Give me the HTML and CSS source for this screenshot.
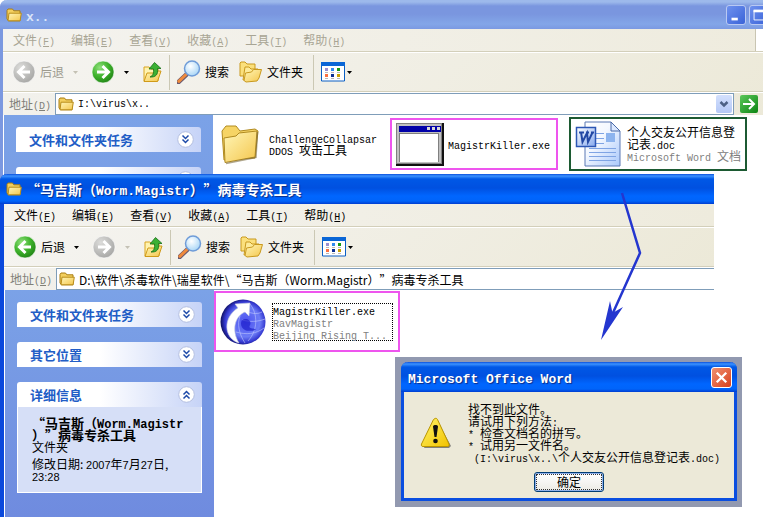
FILE: index.html
```
<!DOCTYPE html>
<html lang="zh-CN">
<head>
    <meta charset="UTF-8">
    <title>x..</title>
    <link rel="stylesheet" href="styles.css">
</head>
<body>
    <!-- shared icons -->
    <svg class="defs" width="0" height="0">
        <defs>
            <linearGradient id="gFolder" x1="0" y1="0" x2="1" y2="1">
                <stop offset="0" stop-color="#fff6b8"/>
                <stop offset="1" stop-color="#f4c64c"/>
            </linearGradient>
            <radialGradient id="gGreen" cx="0.35" cy="0.3" r="0.8">
                <stop offset="0" stop-color="#8fe07c"/>
                <stop offset="0.5" stop-color="#3fb32c"/>
                <stop offset="1" stop-color="#1c7d12"/>
            </radialGradient>
            <radialGradient id="gGray" cx="0.35" cy="0.3" r="0.8">
                <stop offset="0" stop-color="#dcdcda"/>
                <stop offset="1" stop-color="#a3a3a1"/>
            </radialGradient>
            <radialGradient id="gLens" cx="0.4" cy="0.35" r="0.7">
                <stop offset="0" stop-color="#ffffff"/>
                <stop offset="1" stop-color="#a4d4f6"/>
            </radialGradient>
            <linearGradient id="gPaper" x1="0" y1="0" x2="1" y2="1">
                <stop offset="0" stop-color="#ffffff"/>
                <stop offset="0.4" stop-color="#f4f8ff"/>
                <stop offset="1" stop-color="#a9c8fb"/>
            </linearGradient>
            <linearGradient id="gWord" x1="0" y1="0" x2="1" y2="1">
                <stop offset="0" stop-color="#ffffff"/>
                <stop offset="1" stop-color="#86a9ee"/>
            </linearGradient>
            <radialGradient id="gGlobe" cx="0.55" cy="0.5" r="0.55">
                <stop offset="0" stop-color="#4a50ee"/>
                <stop offset="0.6" stop-color="#6c7cf6"/>
                <stop offset="0.82" stop-color="#3438d0"/>
                <stop offset="1" stop-color="#0d0f60"/>
            </radialGradient>
            <linearGradient id="gWarn" x1="0" y1="0" x2="1" y2="1">
                <stop offset="0" stop-color="#fff56a"/>
                <stop offset="1" stop-color="#f2c200"/>
            </linearGradient>
        </defs>
        <symbol id="folder" viewBox="0 0 16 16">
            <path d="M1 3.5 2 2h4.5l1.3 1.8H14v10H2.5L1 12z" fill="#f3cf5e" stroke="#a87d12"/>
            <path d="M2 13.8 3 6.2h12.3l-1.2 7.6z" fill="url(#gFolder)" stroke="#b98d1c"/>
        </symbol>
        <symbol id="back" viewBox="0 0 24 24">
            <circle cx="12" cy="12" r="11" stroke="#fff" stroke-opacity=".6"/>
            <path d="M12.5 6 6.5 12l6 6M7 12h11" fill="none" stroke="#fff" stroke-width="3"/>
        </symbol>
        <symbol id="forward" viewBox="0 0 24 24">
            <circle cx="12" cy="12" r="11" stroke="#fff" stroke-opacity=".6"/>
            <path d="M11.5 6l6 6-6 6M17 12H6" fill="none" stroke="#fff" stroke-width="3"/>
        </symbol>
        <symbol id="up" viewBox="0 0 20 24">
            <path d="M2 21V7h5l2 2h7v12z" fill="#fff3b0" stroke="#d9a520"/>
            <path d="M2 21.500 5 13h7l2-2h5L15.500 21.500z" fill="url(#gFolder)" stroke="#d09a18"/>
            <path d="M8 17c3-1 4-4 3.500-8H7L12.500 2.500 19 8.500H15.500c1 6-2 9-7.500 8.500z" fill="#3cb034" stroke="#156e15" stroke-width=".8"/>
        </symbol>
        <symbol id="search" viewBox="0 0 24 24">
            <path d="M9.500 14.500 1.500 22" stroke="#6a5a70" stroke-width="4.500" stroke-linecap="round"/>
            <path d="M9 14.500 1.800 21.300" stroke="#f08a3c" stroke-width="3" stroke-linecap="round"/>
            <circle cx="15" cy="8.500" r="7.500" fill="url(#gLens)" stroke="#6f9cd8" stroke-width="1.500"/>
        </symbol>
        <symbol id="folders" viewBox="0 0 24 24">
            <path d="M1 16V3l1-1h4l2 2h8v12z" fill="#fbe07c" stroke="#c9991e"/>
            <path d="M4 20 6 7h4l2 2h7v10z" fill="#fdeb9a" stroke="#c9991e"/>
            <path d="M5 20.500 6.500 13l6-1 2-2.500h8L20 18l-2 3-11 1z" fill="url(#gFolder)" stroke="#c9991e"/>
        </symbol>
        <symbol id="views" viewBox="0 0 24 20">
            <path d="M.5 1h23v18H.5z" fill="#fff" stroke="#0a5fc4"/>
            <path d="M0 0h24v4H0z" fill="#0a66d6"/>
            <path d="M4 6h3v3H4z" fill="#9a8ed0"/>
            <path d="M10 6h3v3h-3z" fill="#2e8af0"/>
            <path d="M16 6h3v3h-3z" fill="#169a16"/>
            <path d="M4 12h3v3H4z" fill="#fb7040"/>
            <path d="M10 12h3v3h-3z" fill="#0b2f92"/>
            <path d="M16 12h3v3h-3z" fill="#c8a000"/>
            <path d="M4 10.500h3m3 0h3m3 0h3M4 16.500h3m3 0h3m3 0h3" stroke="#b8b8b8"/>
        </symbol>
        <symbol id="caret" viewBox="0 0 7 7">
            <path d="M1 2h5L3.500 5z" fill="currentColor"/>
        </symbol>
        <symbol id="chevrons" viewBox="0 0 17 17">
            <circle cx="8.500" cy="8.500" r="7.800" fill="#fff" stroke="#b4bfe0"/>
            <path d="M5.500 4.500l3 3 3-3M5.500 8.500l3 3 3-3" fill="none" stroke="#1c49a8" stroke-width="1.500"/>
        </symbol>
    </svg>

    <div class="desktop">
        <section class="window window-back">
            <header class="titlebar">
                <svg class="icon16"><use href="#folder"/></svg>
                <h1><span class="en">x..</span></h1>
                <div class="window-buttons">
                    <button type="button" aria-label="最小化"><svg viewBox="0 0 20 20"><path d="M5 13h7v3H5z" fill="#fff"/></svg></button>
                    <button type="button" aria-label="最大化"><svg viewBox="0 0 20 20"><path d="M4 5.500h12M4.500 5v10.500h11V5" fill="none" stroke="#fff"/><path d="M4 4h12v3H4z" fill="#fff"/></svg></button>
                    <button type="button" class="close" aria-label="关闭"><svg viewBox="0 0 20 20"><path d="M5 5l10 10M15 5 5 15" stroke="#fff" stroke-width="2"/></svg></button>
                </div>
            </header>
            <nav class="menubar">
                <button type="button">文件<span class="en">(<u>F</u>)</span></button>
                <button type="button">编辑<span class="en">(<u>E</u>)</span></button>
                <button type="button">查看<span class="en">(<u>V</u>)</span></button>
                <button type="button">收藏<span class="en">(<u>A</u>)</span></button>
                <button type="button">工具<span class="en">(<u>T</u>)</span></button>
                <button type="button">帮助<span class="en">(<u>H</u>)</span></button>
                <span class="flag"></span>
            </nav>
            <div class="toolbar">
                <button type="button" class="nav off"><svg class="icon24"><use href="#back"/></svg>后退<svg class="caret"><use href="#caret"/></svg></button>
                <button type="button" class="nav"><svg class="icon24"><use href="#forward"/></svg><svg class="caret"><use href="#caret"/></svg></button>
                <button type="button" aria-label="向上"><svg class="icon-up"><use href="#up"/></svg></button>
                <span class="separator"></span>
                <button type="button" class="labelled"><svg class="icon24"><use href="#search"/></svg>搜索</button>
                <button type="button" class="labelled"><svg class="icon24"><use href="#folders"/></svg>文件夹</button>
                <span class="separator"></span>
                <button type="button" class="views" aria-label="查看"><svg class="icon-views"><use href="#views"/></svg><svg class="caret"><use href="#caret"/></svg></button>
            </div>
            <div class="addressbar">
                <label for="address1">地址<span class="en">(<u>D</u>)</span></label>
                <div class="address">
                    <svg class="icon16"><use href="#folder"/></svg>
                    <input id="address1" class="latin" type="text" value="I:\virus\x..">
                    <button type="button" class="drop" aria-label="展开"><svg viewBox="0 0 16 16"><path d="M4.500 6 8 9.500 11.500 6" fill="none" stroke="#4d6185" stroke-width="2.500"/></svg></button>
                </div>
                <button type="button" class="go" aria-label="转到"><svg viewBox="0 0 18 18"><path d="M9 4l5 5-5 5M14 9H3" fill="none" stroke="#fff" stroke-width="2"/></svg></button>
            </div>
            <div class="content">
                <aside class="sidebar">
                    <div class="panel">
                        <h2>文件和文件夹任务<svg class="icon17"><use href="#chevrons"/></svg></h2>
                    </div>
                    <div class="panel">
                        <h2><svg class="icon17"><use href="#chevrons"/></svg></h2>
                    </div>
                </aside>
                <div class="files">
                    <div class="file first">
                        <svg class="icon48" viewBox="0 0 48 48">
                            <path d="M7 40 5 11l4-5h10l4 5 15-2 3 2-3 27z" fill="#f6d465" stroke="#b08a20"/>
                            <path d="M8 42.500 7 18l12-2 3-3 18-2-2 26z" fill="url(#gFolder)" stroke="#b08a20"/>
                            <path d="M40.500 12 39 37.500 9 43.500" fill="none" stroke="#7b6a40" stroke-opacity=".6" stroke-width="1.500"/>
                        </svg>
                        <p><span class="en">ChallengeCollapsar</span><br><span class="en">DDOS </span>攻击工具</p>
                    </div>
                    <div class="file pink">
                        <svg class="icon48" viewBox="0 0 48 48">
                            <path d="M0 3h48v43H0z" fill="#111"/>
                            <path d="M0 3h46v41H0z" fill="#808080"/>
                            <path d="M1 4h44v39H1z" fill="#c0c0c0"/>
                            <path d="M3 6h42v6H3z" fill="#0000a8"/>
                            <path d="M31 7h3v3h-3zM36 7h3v3h-3zM41 7h3v3h-3z" fill="#d8d8d8"/>
                            <path d="M3 13h40v29H3z" fill="#808080"/>
                            <path d="M4 14h38v28H4z" fill="#fff"/>
                        </svg>
                        <p><span class="en">MagistrKiller.exe</span></p>
                    </div>
                    <div class="file green">
                        <svg class="icon48" viewBox="0 0 48 48">
                            <path d="M10 2h26l9 9v35H10z" fill="url(#gPaper)" stroke="#5a78b4"/>
                            <path d="M36 2v9h9z" fill="#dbe8ff" stroke="#4a6aa8"/>
                            <path d="M14 32.500h27M14 36.500h27M14 40.500h27M14 28.500h27M21 13.500h8M21 18.500h8M21 23.500h8" stroke="#7fa4e4"/>
                            <path d="M31 13h9v9h-9z" fill="#8db4ee"/>
                            <path d="M1.500 7.500h19v19h-19z" fill="url(#gWord)" stroke="#2c56b4" stroke-width="1.500"/>
                            <path d="M4 12.500h5M11 12.500h3M16 12.500h3M6 12l1.500 10L12 13l1 9 4.500-9.500" fill="none" stroke="#2348a4" stroke-width="2"/>
                        </svg>
                        <p>个人交友公开信息登<br>记表<span class="en">.doc</span><br><span class="muted"><span class="en">Microsoft Word </span>文档</span></p>
                    </div>
                </div>
            </div>
        </section>

        <section class="window window-front">
            <header class="titlebar">
                <svg class="icon16"><use href="#folder"/></svg>
                <h1>“马吉斯（<span class="en">Worm.Magistr</span>）”病毒专杀工具</h1>
            </header>
            <nav class="menubar">
                <button type="button">文件<span class="en">(<u>F</u>)</span></button>
                <button type="button">编辑<span class="en">(<u>E</u>)</span></button>
                <button type="button">查看<span class="en">(<u>V</u>)</span></button>
                <button type="button">收藏<span class="en">(<u>A</u>)</span></button>
                <button type="button">工具<span class="en">(<u>T</u>)</span></button>
                <button type="button">帮助<span class="en">(<u>H</u>)</span></button>
            </nav>
            <div class="toolbar">
                <button type="button" class="nav"><svg class="icon24"><use href="#back"/></svg>后退<svg class="caret"><use href="#caret"/></svg></button>
                <button type="button" class="nav off"><svg class="icon24"><use href="#forward"/></svg><svg class="caret"><use href="#caret"/></svg></button>
                <button type="button" aria-label="向上"><svg class="icon-up"><use href="#up"/></svg></button>
                <span class="separator"></span>
                <button type="button" class="labelled"><svg class="icon24"><use href="#search"/></svg>搜索</button>
                <button type="button" class="labelled"><svg class="icon24"><use href="#folders"/></svg>文件夹</button>
                <span class="separator"></span>
                <button type="button" class="views" aria-label="查看"><svg class="icon-views"><use href="#views"/></svg><svg class="caret"><use href="#caret"/></svg></button>
            </div>
            <div class="addressbar">
                <label for="address2">地址<span class="en">(<u>D</u>)</span></label>
                <div class="address">
                    <svg class="icon16"><use href="#folder"/></svg>
                    <input id="address2" type="text" value="D:\软件\杀毒软件\瑞星软件\“马吉斯（Worm.Magistr）”病毒专杀工具">
                </div>
            </div>
            <div class="content">
                <aside class="sidebar">
                    <div class="panel">
                        <h2>文件和文件夹任务<svg class="icon17"><use href="#chevrons"/></svg></h2>
                    </div>
                    <div class="panel">
                        <h2>其它位置<svg class="icon17"><use href="#chevrons"/></svg></h2>
                    </div>
                    <div class="panel">
                        <h2>详细信息<svg class="icon17 flip"><use href="#chevrons"/></svg></h2>
                        <div class="details">
                            <p><b>“马吉斯（<span class="en">Worm.Magistr</span><br>）”病毒专杀工具</b><br>文件夹</p>
                            <p>修改日期: <span class="num">2007</span>年<span class="num">7</span>月<span class="num">27</span>日,<br><span class="num">23:28</span></p>
                        </div>
                    </div>
                </aside>
                <div class="files">
                    <div class="file pink selected">
                        <svg class="icon48" viewBox="0 0 48 48">
                            <circle cx="23" cy="24" r="22.500" fill="url(#gGlobe)"/>
                            <path d="M16 34c10 3 20 2 28-4M30 6c8 10 8 26-2 37M28 14c6 2 10 2 14 0M22 22c8 2 15 2 23-1M20 18c-3 8-1 18 5 27" fill="none" stroke="#c0c8ff" stroke-opacity=".6"/>
                            <path d="M22 22c5-3 10 1 8 5s2 3 5 4-6 3-10 1-5-7-3-10z" fill="#1e20cc" fill-opacity=".7"/>
                            <path d="M15 6 30 5 29 18 25 14C15 18 11 32 19 45 3 40 3 19 18 10z" fill="#fff" stroke="#c8ccdc" stroke-width=".6"/>
                        </svg>
                        <p><span class="en">MagistrKiller.exe</span><br><span class="muted"><span class="en">RavMagistr</span><br><span class="en">Beijing Rising T...</span></span></p>
                    </div>
                </div>
            </div>
        </section>

        <div class="dialog-frame">
            <div class="dialog" role="dialog" aria-labelledby="dialogTitle">
                <header class="titlebar">
                    <h1 id="dialogTitle"><span class="en">Microsoft Office Word</span></h1>
                    <button type="button" class="close" aria-label="关闭"><svg viewBox="0 0 20 20"><path d="M5 5l10 10M15 5 5 15" stroke="#fff" stroke-width="2.500"/></svg></button>
                </header>
                <div class="message">
                    <svg class="warning" viewBox="0 0 32 32">
                        <path d="M17 3 31 29 29 31H4z" fill="#555" fill-opacity=".7"/>
                        <path d="M15 1.500c1-.5 2 0 2.500 1L29 27c.5 1.500 0 2.500-1.500 2.500H3C1.500 29.500 1 28.500 1.500 27L13.500 2.500z" fill="url(#gWarn)" stroke="#b99400"/>
                        <path d="M13 9.500c0-2 5-2 5 0L16.500 20h-2z" fill="#111"/>
                        <circle cx="15.500" cy="24" r="2.300" fill="#111"/>
                    </svg>
                    <p>找不到此文件。<br>请试用下列方法<span class="en">:</span><br><span class="en">* </span>检查文档名的拼写。<br><span class="en">* </span>试用另一文件名。<br><span class="en"> (I:\virus\x..\</span>个人交友公开信息登记表<span class="en">.doc)</span></p>
                </div>
                <div class="actions">
                    <button type="button" class="ok"><span>确定</span></button>
                </div>
            </div>
        </div>

        <svg class="arrow" viewBox="0 0 44 150">
            <path d="M22 2 40 62 12 124" fill="none" stroke="#2436cf" stroke-width="2.500"/>
            <path d="M1 149 10 110 12.500 122 23 116z" fill="#2436cf"/>
        </svg>
    </div>
</body>
</html>
```
FILE: styles.css
```
* {
    box-sizing: border-box;
}
body {
    margin: 0;
    background: white;
    color: black;
    font-family: "Noto Sans CJK SC", sans-serif;
    font-size: 12px;
    line-height: 12px;
    text-spacing-trim: space-all;
}
h1, h2, p {
    margin: 0;
}
button, input {
    margin: 0;
    padding: 0;
    border: none;
    background: none;
    color: inherit;
    font: inherit;
    text-spacing-trim: inherit;
}
svg {
    display: block;
    flex: none;
}
.defs {
    position: absolute;
}
.en {
    font-family: "Liberation Mono", monospace;
    font-size: 10px;
    line-height: 0;
    white-space: pre;
}
.num {
    font-family: "Liberation Sans", sans-serif;
    font-size: 11px;
    line-height: 0;
}
.muted {
    color: #808080;
}
.icon16 {
    width: 16px;
    height: 16px;
}
.icon17 {
    width: 17px;
    height: 17px;
    margin-left: auto;
}
.icon24 {
    width: 24px;
    height: 24px;
}
.icon48 {
    width: 48px;
    height: 48px;
}
.icon-up {
    width: 20px;
    height: 24px;
}
.icon-views {
    width: 24px;
    height: 20px;
}
.flip {
    transform: rotate(180deg);
}

/* windows */
.desktop {
    position: relative;
    min-height: 100vh;
    overflow: hidden;
}
.window {
    position: absolute;
    bottom: 0;
    left: 0;
    display: flex;
    flex-direction: column;
    background: white;
}
.window-back {
    top: 0;
    right: -34px;
    border-left: 3px solid #7b98e0;
    border-radius: 7px 0 0 0;
}
.window-front {
    top: 174px;
    right: 49px;
    border-left: 4px solid #0a48dc;
    border-radius: 7px 0 0 0;
}
.titlebar {
    display: flex;
    align-items: center;
    height: 30px;
    flex: none;
    gap: 4px;
    padding: 0 5px 0 2px;
    color: white;
    background: linear-gradient(#0a50dc 0, #3c92ff 2px, #0058e6 5px, #0050e0 14px, #0066ff 22px, #0064fa 27px, #003dd0 30px);
}
.titlebar h1 {
    flex: 1;
    font-size: 14px;
    line-height: 20px;
    font-weight: bold;
    white-space: nowrap;
    text-shadow: 1px 1px 1px #0a2c88;
}
.titlebar .en {
    font-size: 13px;
}
.window .titlebar {
    margin-left: -4px;
    padding-left: 6px;
    border-radius: 7px 0 0 0;
}
.window-back .titlebar {
    height: 29px;
    margin-left: -3px;
    color: #dbe5f9;
    background: linear-gradient(#9db9eb 0, #9db9eb 2px, #7a96df 6px, #7a96df 14px, #83a6e8 24px, #7b99e2 29px);
}
.window-back .titlebar h1 {
    text-shadow: none;
}
.window-buttons {
    display: flex;
    gap: 3px;
}
.window-buttons button {
    width: 20px;
    height: 20px;
    border: 1px solid #b9c9f3;
    border-radius: 3px;
    background: linear-gradient(135deg, #6e91ee, #3a63d8);
}
.window-buttons .close {
    background: #c8705c;
}
.menubar {
    display: flex;
    align-items: center;
    gap: 16px;
    height: 23px;
    flex: none;
    padding-left: 10px;
    border-bottom: 1px solid #d3cfba;
    background: linear-gradient(90deg, #f4f3ef, #eeebdd);
}
.menubar button {
    white-space: nowrap;
}
.window-back .menubar {
    color: #a8a594;
}
.flag {
    align-self: stretch;
    width: 42px;
    margin-left: auto;
    border-left: 1px solid #c9c5b2;
    background: white;
}
.toolbar {
    display: flex;
    align-items: center;
    gap: 7px;
    height: 40px;
    flex: none;
    padding-left: 9px;
    border-top: 1px solid white;
    border-bottom: 1px solid #d3cfba;
    background: linear-gradient(135deg, #f5f4f1, #ece9d8);
}
.toolbar button {
    display: flex;
    align-items: center;
    gap: 4px;
    fill: url(#gGreen);
}
.toolbar .off {
    color: #9c9a8e;
    fill: url(#gGray);
}
.toolbar .off .caret {
    color: #c4c1b4;
}
.toolbar .nav {
    padding-right: 5px;
}
.toolbar .labelled {
    padding-right: 3px;
}
.toolbar .views {
    gap: 1px;
}
.caret {
    width: 7px;
    height: 7px;
}
.nav .caret {
    margin-left: 4px;
}
.separator {
    width: 1px;
    height: 35px;
    background: #cbc8b4;
}
.addressbar {
    display: flex;
    align-items: center;
    height: 23px;
    flex: none;
    gap: 4px;
    padding-left: 6px;
    border-top: 1px solid white;
    color: #808078;
    background: linear-gradient(90deg, #f2f1ec, #ece9d8);
}
.window-back .addressbar {
    padding-right: 39px;
}
.address {
    display: flex;
    align-items: center;
    align-self: stretch;
    flex: 1;
    gap: 4px;
    padding: 0 1px 0 2px;
    border: 1px solid #7f9db9;
    background: white;
    color: black;
}
.window-back .address {
    margin-right: 2px;
}
.window-front .address {
    border-right: none;
}
.address input {
    flex: 1;
    min-width: 0;
    height: 18px;
    outline: none;
}
.address .latin {
    font-family: "Liberation Mono", monospace;
    font-size: 10px;
}
.drop {
    width: 16px;
    height: 18px;
    border-radius: 2px;
    background: linear-gradient(#d3e0fd, #b4c8f6);
}
.go {
    width: 18px;
    height: 18px;
    border-radius: 2px;
    background: linear-gradient(135deg, #5cc85a, #0b8412);
}

/* folder view */
.content {
    display: flex;
    flex: 1;
    min-height: 0;
    overflow: hidden;
}
.sidebar {
    display: flex;
    flex-direction: column;
    gap: 15px;
    width: 210px;
    flex: none;
    padding: 12px;
    border-left: 1px solid white;
    background: linear-gradient(#7ba2e7, #6f8bdf);
}
.panel h2 {
    display: flex;
    align-items: center;
    height: 25px;
    padding: 0 7px 0 13px;
    border-radius: 3px 3px 0 0;
    color: #215dc6;
    background: linear-gradient(90deg, #ffffff 45%, #c6d3f7);
    font-size: 13px;
    font-weight: bold;
}
.details {
    padding: 10px 14px;
    border: 1px solid white;
    border-top: none;
    background: #d6dff7;
}
.details p {
    white-space: nowrap;
}
.details p + p {
    margin-top: 5px;
}
.details b {
    font-size: 13px;
    line-height: 0;
}
.details .en {
    font-size: 12px;
}
.files {
    display: flex;
    align-items: center;
    align-self: flex-start;
    padding-top: 2px;
}
.window-front .files {
    padding-top: 1px;
}
.file {
    display: flex;
    align-items: center;
    gap: 4px;
    padding: 0 4px;
    white-space: nowrap;
}
.first {
    width: 177px;
}
.pink {
    width: 168px;
    border: 2px solid #ee55ee;
}
.green {
    width: 178px;
    height: 54px;
    margin-left: 11px;
    border: 2px solid #1c5a32;
}
.selected {
    width: 186px;
    height: 61px;
}
.selected p {
    width: 121px;
    border: 1px dotted black;
}

/* message box */
.dialog-frame {
    position: absolute;
    top: 357px;
    left: 395px;
    padding: 5px 5px 6px 6px;
    background: #9299b0;
}
.dialog {
    width: 336px;
    border: 3px solid #0a4ee0;
    border-top: none;
    border-radius: 7px 7px 0 0;
    background: #ece9d8;
}
.dialog .titlebar {
    margin: 0 -3px;
    padding-left: 7px;
    border-radius: 7px 7px 0 0;
}
.dialog .close {
    width: 21px;
    height: 21px;
    border: 1px solid white;
    border-radius: 3px;
    background: linear-gradient(135deg, #f09070, #d8401c);
}
.message {
    display: flex;
    gap: 16px;
    padding: 11px 14px 0 16px;
    white-space: nowrap;
}
.warning {
    width: 32px;
    height: 32px;
    margin-top: 14px;
}
.actions {
    display: flex;
    justify-content: center;
    padding: 9px 0 6px;
}
.ok {
    width: 70px;
    height: 20px;
    padding: 1px;
    border: 1px solid #003c74;
    border-radius: 3px;
    background: linear-gradient(#ffffff, #ecebe5);
    box-shadow: inset 0 0 0 1px #8fb0ea;
}
.ok span {
    display: block;
    height: 16px;
    border: 1px dotted #333333;
    line-height: 14px;
}
.arrow {
    position: absolute;
    top: 191px;
    left: 600px;
    width: 44px;
    height: 150px;
}
```
